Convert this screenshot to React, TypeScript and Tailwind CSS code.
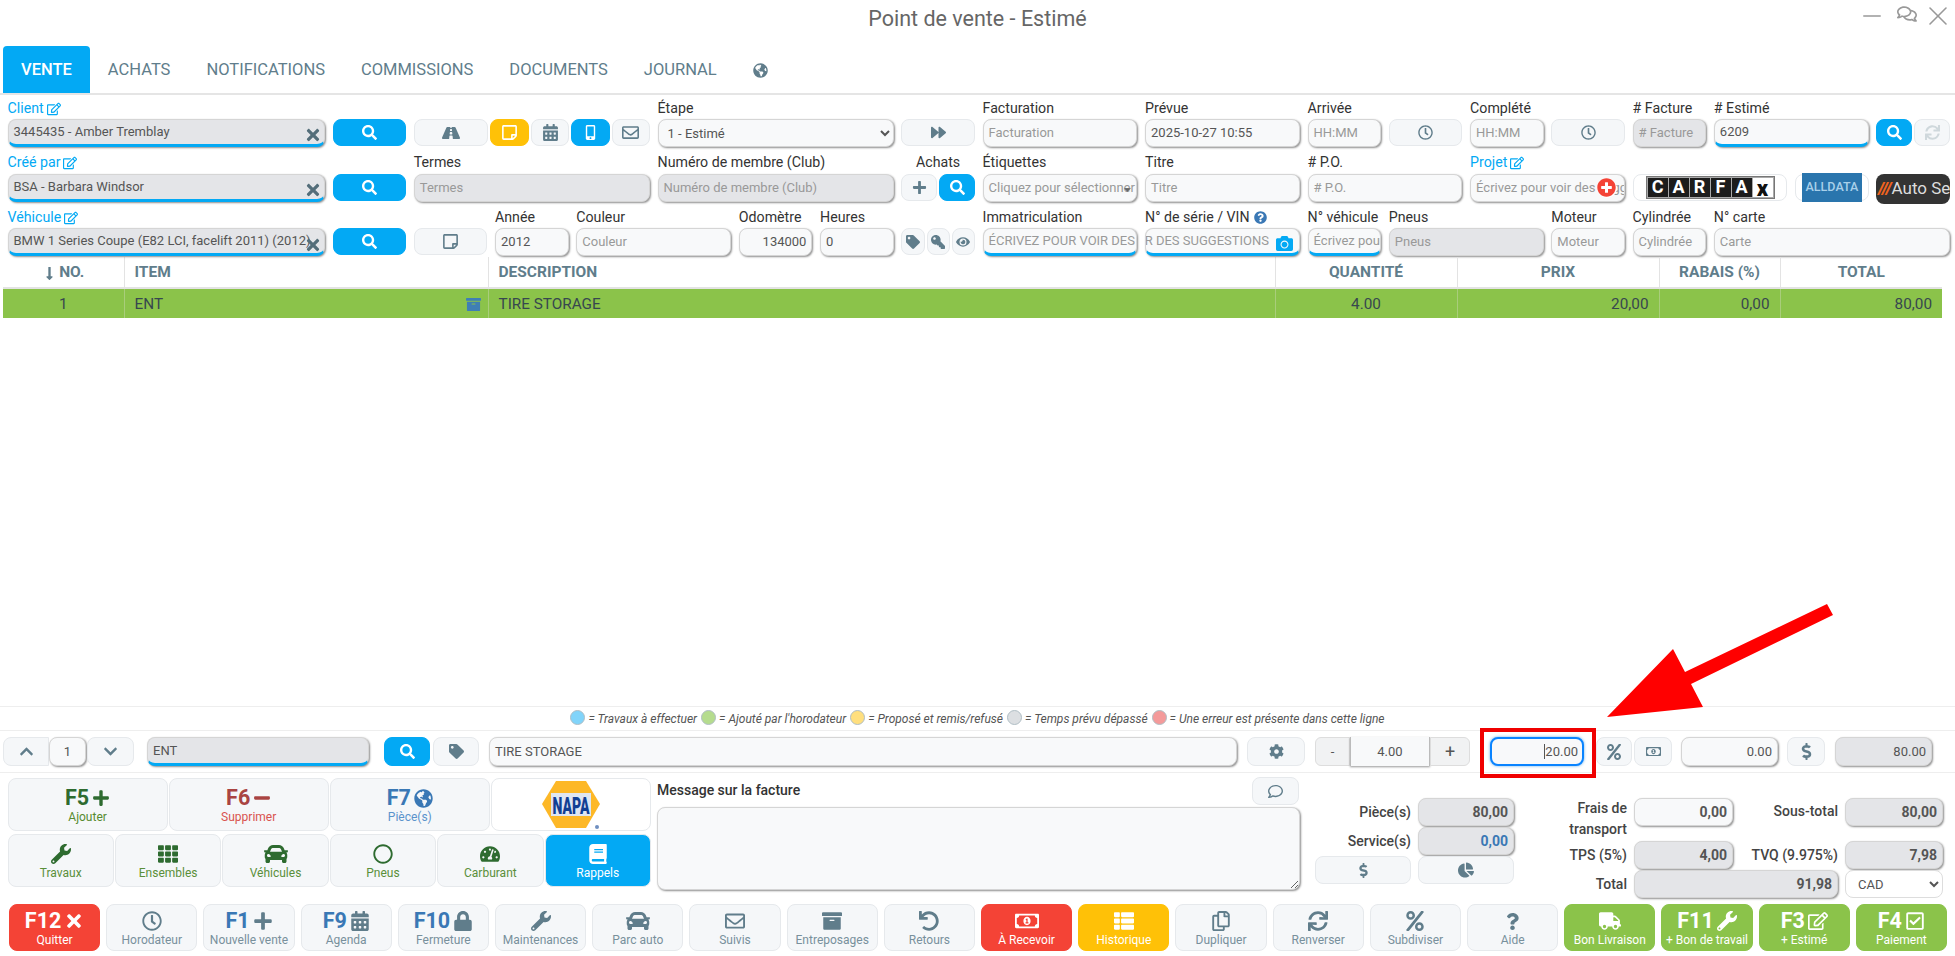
import type { ReactNode } from 'react'
import {
  FaArchive, FaBook, FaCalendarAlt, FaCamera, FaCar, FaCaretDown, FaChartPie, FaChevronDown, FaChevronUp, FaCog,
  FaDollarSign, FaForward, FaGlobeAmericas, FaKey, FaLock, FaLongArrowAltDown, FaMinus, FaMobileAlt,
  FaEye, FaPercent, FaPlus, FaPlusCircle, FaQuestion, FaQuestionCircle, FaRegCheckSquare, FaRegCircle,
  FaRegClock, FaRegComment, FaRegComments, FaRegCopy, FaRegEdit, FaRegEnvelope, FaRegMoneyBillAlt,
  FaRegStickyNote, FaRoad, FaSearch, FaSync, FaTachometerAlt, FaTag, FaTh, FaThList, FaTimes, FaTruck, FaUndo, FaWrench,
} from 'react-icons/fa'
import { Minus, X } from 'lucide-react'

const inputBase =
  'flex h-full w-full min-w-0 items-center overflow-hidden whitespace-nowrap rounded-lg border border-[#d5d5d5] px-[5px] text-[13px] shadow-[1px_1px_2px_#8f8f8f]'

interface FieldProps {
  value?: string
  placeholder?: string
  gray?: boolean
  accent?: boolean
  right?: boolean
  className?: string
  children?: ReactNode
}

function Field({ value, placeholder, gray, accent, right, className, children }: FieldProps) {
  return (
    <div
      className={`${inputBase} ${gray ? 'bg-[#e4e5e8]' : 'bg-[#f8f9fa]'} ${accent ? 'border-b-[3px] border-b-[#03a9f4]' : ''} ${right ? 'justify-end' : ''} ${className ?? ''}`}
    >
      <span className={value ? 'text-[#555]' : 'text-[#999]'}>{value ?? placeholder}</span>
      {children}
    </div>
  )
}

function Btn({ children, className, tone }: { children?: ReactNode; className?: string; tone?: 'blue' | 'yellow' }) {
  const toneClass =
    tone === 'blue'
      ? 'bg-[#03a9f4] border-[#03a9f4] text-white'
      : tone === 'yellow'
        ? 'bg-[#ffc107] border-[#ffc107] text-white'
        : 'bg-[#f5f7f9] border-[#e6e9ec] text-[#607d8b]'
  return (
    <div className={`flex h-[27px] min-w-0 flex-1 items-center justify-center rounded-lg border text-[15px] ${toneClass} ${className ?? ''}`}>
      {children}
    </div>
  )
}

function Cell({ span, label, link, center, children }: { span: string; label?: ReactNode; link?: boolean; center?: boolean; children: ReactNode }) {
  return (
    <div className={`${span} flex min-w-0 flex-col`}>
      <div
        className={`flex h-[23px] items-center gap-[3px] whitespace-nowrap pt-[2px] text-[14.2px] ${link ? 'text-[#03a9f4]' : 'text-[#333]'} ${center ? 'justify-center' : ''}`}
      >
        {label}
        {link && <FaRegEdit className="text-[14px]" />}
      </div>
      <div className="flex h-[28px] gap-[2px]">{children}</div>
    </div>
  )
}

function ClearIcon({ className }: { className?: string }) {
  return <FaTimes className={`-mr-[3px] ml-auto mt-[6px] shrink-0 text-[18px] text-[#546e7a] ${className ?? ''}`} />
}

function TopForm() {
  const row = 'grid grid-cols-[repeat(24,minmax(0,1fr))] gap-x-[7.6px] pl-[7.5px] pr-[5px]'
  return (
    <div className="pt-[1px]">
      <div className={`${row} h-[54.5px]`}>
        <Cell span="col-span-4" label="Client" link>
          <Field value="3445435 - Amber Tremblay" gray accent><ClearIcon /></Field>
        </Cell>
        <Cell span="col-span-1"><Btn tone="blue"><FaSearch /></Btn></Cell>
        <Cell span="col-span-3">
          <Btn className="flex-[2] !text-[18px]"><FaRoad /></Btn>
          <Btn tone="yellow" className="!text-[17px]"><FaRegStickyNote /></Btn>
          <Btn className="!text-[17px]"><FaCalendarAlt /></Btn>
          <Btn tone="blue"><FaMobileAlt /></Btn>
          <Btn className="!text-[17px]"><FaRegEnvelope /></Btn>
        </Cell>
        <Cell span="col-span-3" label="Étape">
          <select className={`${inputBase} bg-[#f8f9fa] text-[#555]`} defaultValue="1">
            <option value="1">1 - Estimé</option>
          </select>
        </Cell>
        <Cell span="col-span-1"><Btn><FaForward /></Btn></Cell>
        <Cell span="col-span-2" label="Facturation"><Field placeholder="Facturation" /></Cell>
        <Cell span="col-span-2" label="Prévue"><Field value="2025-10-27 10:55" /></Cell>
        <Cell span="col-span-1" label="Arrivée"><Field placeholder="HH:MM" /></Cell>
        <Cell span="col-span-1"><Btn><FaRegClock /></Btn></Cell>
        <Cell span="col-span-1" label="Complété"><Field placeholder="HH:MM" /></Cell>
        <Cell span="col-span-1"><Btn><FaRegClock /></Btn></Cell>
        <Cell span="col-span-1" label="# Facture"><Field placeholder="# Facture" gray /></Cell>
        <Cell span="col-span-2" label="# Estimé"><Field value="6209" accent /></Cell>
        <Cell span="col-span-1">
          <Btn tone="blue"><FaSearch /></Btn>
          <Btn className="!text-[#cfd8dc]"><FaSync /></Btn>
        </Cell>
      </div>

      <div className={`${row} h-[54.5px]`}>
        <Cell span="col-span-4" label="Créé par" link>
          <Field value="BSA - Barbara Windsor" gray accent><ClearIcon /></Field>
        </Cell>
        <Cell span="col-span-1"><Btn tone="blue"><FaSearch /></Btn></Cell>
        <Cell span="col-span-3" label="Termes"><Field placeholder="Termes" gray /></Cell>
        <Cell span="col-span-3" label="Numéro de membre (Club)"><Field placeholder="Numéro de membre (Club)" gray /></Cell>
        <Cell span="col-span-1" label="Achats" center>
          <Btn><FaPlus /></Btn>
          <Btn tone="blue"><FaSearch /></Btn>
        </Cell>
        <Cell span="col-span-2" label="Étiquettes">
          <Field placeholder="Cliquez pour sélectionner" className="relative border-[#bbb]">
            <FaCaretDown className="absolute right-[3px] top-[9px] text-[11px] text-[#666]" />
          </Field>
        </Cell>
        <Cell span="col-span-2" label="Titre"><Field placeholder="Titre" /></Cell>
        <Cell span="col-span-2" label="# P.O."><Field placeholder="# P.O." /></Cell>
        <Cell span="col-span-2" label="Projet" link>
          <Field placeholder="Écrivez pour voir des suggestions" className="relative">
            <span className="absolute right-[7px] top-[3px] flex h-[20px] w-[20px] items-center justify-center rounded-full bg-white">
              <FaPlusCircle className="text-[19px] text-[#f44336]" />
            </span>
          </Field>
        </Cell>
        <Cell span="col-span-2">
          <Btn className="!bg-white"><CarfaxLogo /></Btn>
        </Cell>
        <Cell span="col-span-1">
          <Btn className="!bg-white px-[6px]">
            <div className="flex h-[29px] w-full items-center justify-center bg-[#2a75ad] text-[12.5px] font-medium text-[#a8d0ea]">ALLDATA</div>
          </Btn>
        </Cell>
        <Cell span="col-span-1">
          <div className="flex h-[30px] w-full items-center overflow-hidden whitespace-nowrap rounded-lg bg-[#333] pl-[2px] text-[17px] text-[#ddd]">
            <span className="font-black italic text-[#f0641e]">///</span>Auto Serv
          </div>
        </Cell>
      </div>

      <div className={`${row} h-[51px]`}>
        <Cell span="col-span-4" label="Véhicule" link>
          <Field value="BMW 1 Series Coupe (E82 LCI, facelift 2011) (2012)" gray accent className="relative">
            <FaTimes className="absolute right-[2px] top-[7px] text-[18px] text-[#546e7a]" />
          </Field>
        </Cell>
        <Cell span="col-span-1"><Btn tone="blue"><FaSearch /></Btn></Cell>
        <Cell span="col-span-1"><Btn className="!text-[17px]"><FaRegStickyNote /></Btn></Cell>
        <Cell span="col-span-1" label="Année"><Field value="2012" /></Cell>
        <Cell span="col-span-2" label="Couleur"><Field placeholder="Couleur" /></Cell>
        <Cell span="col-span-1" label="Odomètre"><Field value="134000" right /></Cell>
        <Cell span="col-span-1" label="Heures"><Field value="0" /></Cell>
        <Cell span="col-span-1">
          <Btn className="!text-[14px]"><FaTag /></Btn>
          <Btn className="!text-[14px]"><FaKey className="-scale-x-100" /></Btn>
          <Btn className="!text-[14px]"><FaEye /></Btn>
        </Cell>
        <Cell span="col-span-2" label="Immatriculation"><Field placeholder="ÉCRIVEZ POUR VOIR DES SUGGESTIONS" accent /></Cell>
        <Cell
          span="col-span-2"
          label={<>N° de série / VIN <FaQuestionCircle className="ml-[1px] text-[13px] text-[#3a78b5]" /></>}
        >
          <Field placeholder="ÉCRIVEZ POUR VOIR DES SUGGESTIONS" accent right className="relative pr-[30px]">
            <FaCamera className="absolute right-[6px] top-[6px] text-[17px] text-[#03a9f4]" />
          </Field>
        </Cell>
        <Cell span="col-span-1" label="N° véhicule"><Field placeholder="Écrivez pour" accent /></Cell>
        <Cell span="col-span-2" label="Pneus"><Field placeholder="Pneus" gray /></Cell>
        <Cell span="col-span-1" label="Moteur"><Field placeholder="Moteur" /></Cell>
        <Cell span="col-span-1" label="Cylindrée"><Field placeholder="Cylindrée" /></Cell>
        <Cell span="col-span-3" label="N° carte"><Field placeholder="Carte" /></Cell>
      </div>
    </div>
  )
}

function CarfaxLogo() {
  return (
    <div className="flex h-[23px] items-center gap-[1px] border border-[#777] bg-[#aaa] px-[1px] text-[18px] font-bold leading-none text-white">
      {['C', 'A', 'R', 'F', 'A'].map((letter, i) => (
        <span key={i} className="flex h-[19px] w-[20px] items-center justify-center bg-[#1c1c1c]">{letter}</span>
      ))}
      <span className="flex h-[19px] w-[20px] items-end justify-center bg-white text-[22px] font-black leading-[17px] text-[#111]">x</span>
    </div>
  )
}

function LinesTable() {
  const head = 'border-l border-[#e3e3e3] px-[10px] pt-[2px] text-[15.5px] font-bold text-[#607d8b]'
  const cell = 'border-l border-[#a9cd7b] px-[10px] pt-[1px] text-[15.3px] text-[#37474f]'
  return (
    <table className="ml-[3px] mt-[1px] w-[1939px] table-fixed border-collapse">
      <colgroup>
        <col className="w-[121px]" />
        <col className="w-[364px]" />
        <col className="w-[787px]" />
        <col className="w-[182px]" />
        <col className="w-[202px]" />
        <col className="w-[121px]" />
        <col className="w-[162px]" />
      </colgroup>
      <thead>
        <tr className="h-[31px] border-b-2 border-[#e3e3e3]">
          <th className="pt-[2px] text-center text-[15.5px] font-bold text-[#607d8b]">
            <FaLongArrowAltDown className="mr-[2px] inline text-[15px]" />NO.
          </th>
          <th className={`${head} text-left`}>ITEM</th>
          <th className={`${head} text-left`}>DESCRIPTION</th>
          <th className={`${head} text-center`}>QUANTITÉ</th>
          <th className={`${head} text-center`}>PRIX</th>
          <th className={`${head} text-center`}>RABAIS (%)</th>
          <th className={`${head} text-center`}>TOTAL</th>
        </tr>
      </thead>
      <tbody>
        <tr className="h-[30px] bg-[#8bc34a]">
          <td className="pt-[1px] text-center text-[15.3px] text-[#37474f]">1</td>
          <td className={cell}>
            <div className="flex items-center justify-between">ENT<FaArchive className="mr-[-3px] text-[15px] text-[#3f7fb5]" /></div>
          </td>
          <td className={cell}>TIRE STORAGE</td>
          <td className={`${cell} text-center`}>4.00</td>
          <td className={`${cell} text-right`}>20,00</td>
          <td className={`${cell} text-right`}>0,00</td>
          <td className={`${cell} text-right`}>80,00</td>
        </tr>
      </tbody>
    </table>
  )
}

function Legend() {
  const items = [
    ['bg-[#81d4fa]', 'Travaux à effectuer'],
    ['bg-[#b5dc8e]', "Ajouté par l'horodateur"],
    ['bg-[#ffdf7e]', 'Proposé et remis/refusé'],
    ['bg-[#dcdfe2]', 'Temps prévu dépassé'],
    ['bg-[#f49a9a]', 'Une erreur est présente dans cette ligne'],
  ]
  return (
    <div className="flex h-[25px] items-center justify-center gap-[4px] border-y border-[#eee] text-[12px] italic text-[#555]">
      {items.map(([color, text]) => (
        <span key={text} className="flex items-center gap-[3px]">
          <span className={`mb-[3px] h-[15px] w-[15px] rounded-full border border-[#b0bec5] ${color}`} />= {text}
        </span>
      ))}
    </div>
  )
}

function LineEditor() {
  return (
    <div className="mt-[6px] flex h-[29px] items-stretch pl-[3px]">
      <Btn className="!h-full w-[46px] !flex-none rounded-r-none"><FaChevronUp /></Btn>
      <div className="w-[37px] flex-none"><Field value="1" className="justify-center" /></div>
      <Btn className="!h-full ml-[1px] w-[47px] !flex-none"><FaChevronDown /></Btn>
      <div className="ml-[13px] w-[222px] flex-none"><Field value="ENT" gray accent /></div>
      <Btn tone="blue" className="!h-full ml-[15px] w-[46px] !flex-none"><FaSearch /></Btn>
      <Btn className="!h-full ml-[3px] w-[46px] !flex-none"><FaTag /></Btn>
      <div className="ml-[10px] w-[748px] flex-none"><Field value="TIRE STORAGE" /></div>
      <Btn className="!h-full ml-[10px] w-[58px] !flex-none"><FaCog /></Btn>
      <div className="ml-[10px] flex w-[155px] flex-none text-[13px] text-[#555]">
        <div className="flex w-[35px] items-center justify-center rounded-l-md border border-[#ddd] bg-[#f1f2f3]">-</div>
        <div className="flex w-[80px] items-center justify-center border-x border-[#bbb] bg-[#f8f9fa] shadow-[0_1px_2px_#999]">4.00</div>
        <div className="flex w-[40px] items-center justify-center rounded-r-md border border-[#ddd] bg-[#f1f2f3] text-[18px]">+</div>
      </div>
      <div className="relative ml-[20px] w-[94px] flex-none">
        <div className="flex h-full w-full items-center justify-end rounded-lg border-2 border-[#0a84ff] bg-[#f8f9fa] px-[4px] text-[13px] text-[#555] shadow-[0_0_3px_#66afe9]">
          <span className="border-l border-[#555] leading-[15px]">20.00</span>
        </div>
        <div className="absolute -bottom-[12px] -left-[10px] -right-[12px] -top-[9px] border-[4px] border-[#f00000]" />
      </div>
      <Btn className="!h-full ml-[12px] w-[36px] !flex-none !text-[16px]"><FaPercent /></Btn>
      <Btn className="!h-full ml-[2px] w-[38px] !flex-none"><FaRegMoneyBillAlt /></Btn>
      <div className="ml-[9px] w-[97px] flex-none"><Field value="0.00" right /></div>
      <Btn className="!h-full ml-[9px] w-[38px] !flex-none !text-[17px]"><FaDollarSign /></Btn>
      <div className="ml-[10px] w-[97px] flex-none"><Field value="80.00" gray right /></div>
    </div>
  )
}

function NapaLogo() {
  return (
    <svg width="60" height="50" viewBox="0 0 60 50">
      <polygon points="15,1 45,1 59,24 45,48 15,48 1,24" fill="#fdb827" />
      <rect x="10" y="13" width="40" height="23" fill="#dfe6f2" />
      <text x="30" y="34" textAnchor="middle" fontFamily="Roboto, sans-serif" fontWeight="900" fontSize="24" fill="#123f94" textLength="37" lengthAdjust="spacingAndGlyphs">NAPA</text>
      <circle cx="56" cy="47" r="2" fill="#6f8fc0" />
    </svg>
  )
}

function ShortcutPanel() {
  const second = [
    { icon: <FaWrench />, label: 'Travaux' },
    { icon: <FaTh />, label: 'Ensembles' },
    { icon: <FaCar className="text-[24px]" />, label: 'Véhicules' },
    { icon: <FaRegCircle />, label: 'Pneus' },
    { icon: <FaTachometerAlt />, label: 'Carburant' },
  ]
  const tile = 'flex flex-col items-center justify-end rounded-lg border border-[#e6e9ec] pb-[4px]'
  const keyText = 'flex h-[20px] items-center gap-[3px] text-[21.5px] font-bold'
  return (
    <div className="flex w-[651px] flex-none flex-col gap-[3px] pl-[7.5px] pt-[1px]">
      <div className="grid h-[53px] grid-cols-4 gap-px">
        <div className={`${tile} bg-[#f5f7f9] text-[#2e6b30]`}>
          <span className={keyText}>F5<FaPlus className="text-[18px]" /></span>
          <span className="text-[12px] leading-[18px] text-[#558b2f]">Ajouter</span>
        </div>
        <div className={`${tile} bg-[#f5f7f9] text-[#a94442]`}>
          <span className={keyText}>F6<FaMinus className="text-[18px]" /></span>
          <span className="text-[12px] leading-[18px] text-[#d9534f]">Supprimer</span>
        </div>
        <div className={`${tile} bg-[#f5f7f9] text-[#3a78b5]`}>
          <span className={keyText}>F7<FaGlobeAmericas className="text-[19px]" /></span>
          <span className="text-[12px] leading-[18px] text-[#5b93cc]">Pièce(s)</span>
        </div>
        <div className={`${tile} !justify-center !pb-0 bg-white`}><NapaLogo /></div>
      </div>
      <div className="grid h-[53px] grid-cols-6 gap-px">
        {second.map((item) => (
          <div key={item.label} className={`${tile} bg-[#f5f7f9] text-[#2e6b30]`}>
            <span className="flex h-[20px] items-center text-[20px]">{item.icon}</span>
            <span className="text-[12px] leading-[18px] text-[#5a8f3a]">{item.label}</span>
          </div>
        ))}
        <div className={`${tile} border-[#03a9f4] bg-[#03a9f4] text-white`}>
          <span className="flex h-[20px] items-center text-[20px]"><FaBook /></span>
          <span className="text-[12px] leading-[18px]">Rappels</span>
        </div>
      </div>
    </div>
  )
}

function MessagePanel() {
  return (
    <div className="ml-[6px] flex w-[643px] flex-none flex-col">
      <div className="flex h-[30px] items-start justify-between">
        <span className="mt-[3px] text-[14px] font-medium text-[#333]">Message sur la facture</span>
        <Btn className="!h-[28px] mr-[1px] w-[47px] !flex-none"><FaRegComment /></Btn>
      </div>
      <textarea className="h-[83px] w-full rounded-lg border border-[#d5d5d5] bg-[#f8f9fa] shadow-[1px_1px_2px_#8f8f8f]" readOnly />
    </div>
  )
}

function Amount({ value, blue, gray }: { value: string; blue?: boolean; gray?: boolean }) {
  return (
    <div
      className={`flex h-[28px] items-center justify-end rounded-lg border border-[#d5d5d5] px-[5px] text-[14px] font-bold shadow-[1px_1px_2px_#8f8f8f] ${gray ? 'bg-[#e4e5e8]' : 'bg-[#f8f9fa]'} ${blue ? 'text-[#3a78b5]' : 'text-[#555]'}`}
    >
      {value}
    </div>
  )
}

function PartsPanel() {
  return (
    <div className="ml-[15px] grid w-[199px] flex-none grid-cols-[96px_96px] grid-rows-[28px_28px_28px] gap-x-[7px] gap-y-px pt-[21px] text-[14px] font-medium text-[#444]">
      <span className="flex items-center justify-end">Pièce(s)</span>
      <Amount value="80,00" gray />
      <span className="flex items-center justify-end">Service(s)</span>
      <Amount value="0,00" gray blue />
      <Btn className="!h-[28px]"><FaDollarSign /></Btn>
      <Btn className="!h-[28px] !text-[16px]"><FaChartPie /></Btn>
    </div>
  )
}

function TotalsPanel() {
  const label = 'flex items-center justify-end text-right'
  return (
    <div className="ml-[6px] grid w-[423px] flex-none grid-cols-[107px_99px_98px_98px] grid-rows-[42px_28px_28px] gap-x-[7px] gap-y-px pt-[21px] text-[14px] font-medium leading-[21px] text-[#444]">
      <span className="text-right">Frais de transport</span>
      <div><Amount value="0,00" /></div>
      <span className="mt-[3px] h-[21px] text-right">Sous-total</span>
      <div><Amount value="80,00" gray /></div>
      <span className={label}>TPS (5%)</span>
      <Amount value="4,00" gray />
      <span className={label}>TVQ (9.975%)</span>
      <Amount value="7,98" gray />
      <span className={label}>Total</span>
      <div className="col-span-2"><Amount value="91,98" gray /></div>
      <select className="h-[28px] rounded-lg border border-[#ddd] bg-white pl-[8px] text-[13px] font-normal text-[#555]" defaultValue="CAD">
        <option>CAD</option>
      </select>
    </div>
  )
}

type Tone = 'plain' | 'red' | 'yellow' | 'green'

interface Action {
  label: string
  icon: ReactNode
  fkey?: string
  tone?: Tone
}

const actions: Action[] = [
  { fkey: 'F12', icon: <FaTimes />, label: 'Quitter', tone: 'red' },
  { icon: <FaRegClock />, label: 'Horodateur' },
  { fkey: 'F1', icon: <FaPlus />, label: 'Nouvelle vente' },
  { fkey: 'F9', icon: <FaCalendarAlt />, label: 'Agenda' },
  { fkey: 'F10', icon: <FaLock />, label: 'Fermeture' },
  { icon: <FaWrench />, label: 'Maintenances' },
  { icon: <FaCar className="text-[24px]" />, label: 'Parc auto' },
  { icon: <FaRegEnvelope />, label: 'Suivis' },
  { icon: <FaArchive />, label: 'Entreposages' },
  { icon: <FaUndo />, label: 'Retours' },
  { icon: <FaRegMoneyBillAlt className="text-[24px]" />, label: 'À Recevoir', tone: 'red' },
  { icon: <FaThList />, label: 'Historique', tone: 'yellow' },
  { icon: <FaRegCopy />, label: 'Dupliquer' },
  { icon: <FaSync />, label: 'Renverser' },
  { icon: <FaPercent />, label: 'Subdiviser' },
  { icon: <FaQuestion className="text-[17px]" />, label: 'Aide' },
  { icon: <FaTruck className="text-[22px]" />, label: 'Bon Livraison', tone: 'green' },
  { fkey: 'F11', icon: <FaWrench />, label: '+ Bon de travail', tone: 'green' },
  { fkey: 'F3', icon: <FaRegEdit />, label: '+ Estimé', tone: 'green' },
  { fkey: 'F4', icon: <FaRegCheckSquare />, label: 'Paiement', tone: 'green' },
]

const toneStyles: Record<Tone, string> = {
  plain: 'bg-[#f5f7f9] border-[#e6e9ec] text-[#607d8b]',
  red: 'bg-[#f44336] border-[#f44336] text-white',
  yellow: 'bg-[#ffc107] border-[#ffc107] text-white',
  green: 'bg-[#8bc34a] border-[#8bc34a] text-white',
}

function ActionBar() {
  return (
    <div className="mb-[5px] ml-[9px] mt-[7px] grid h-[47px] w-[1938px] grid-cols-[repeat(20,minmax(0,1fr))] gap-x-[6px]">
      {actions.map((action) => {
        const tone = action.tone ?? 'plain'
        return (
          <div key={action.label} className={`flex flex-col items-center justify-end overflow-hidden whitespace-nowrap rounded-lg border pb-[2px] ${toneStyles[tone]}`}>
            <span className="flex h-[22px] items-center gap-[3px] text-[20px]">
              {action.fkey && (
                <span className={`text-[21.5px] font-bold ${tone === 'plain' ? 'text-[#3a78b5]' : ''}`}>{action.fkey}</span>
              )}
              {action.icon}
            </span>
            <span className={`text-[12px] leading-[16px] ${tone === 'plain' ? 'text-[#78909c]' : ''}`}>{action.label}</span>
          </div>
        )
      })}
    </div>
  )
}

export default function App() {
  const tabs = ['ACHATS', 'NOTIFICATIONS', 'COMMISSIONS', 'DOCUMENTS', 'JOURNAL']
  return (
    <div className="relative flex h-[956px] w-[1955px] flex-col overflow-hidden bg-white font-['Roboto',sans-serif]">
      <header className="relative flex h-[46px] items-start justify-center pt-[3px] text-[21.5px] text-[#666]">
        Point de vente - Estimé
        <div className="absolute right-[1px] top-0 flex h-[32px] items-center text-[#999]">
          <Minus size={28} strokeWidth={1.4} />
          <FaRegComments className="mb-[4px] ml-[11px] text-[20px]" />
          <X size={32} strokeWidth={1.2} className="ml-[5px]" />
        </div>
      </header>

      <nav className="flex h-[49px] flex-none items-stretch border-b-2 border-[#e5e5e5] pl-[3px] text-[16.5px] text-[#607d8b]">
        <div className="flex items-center rounded-t-sm bg-[#03a9f4] px-[18px] pt-[2px] font-medium text-white">VENTE</div>
        {tabs.map((tab) => (
          <div key={tab} className="flex items-center px-[18px] pt-[2px]">{tab}</div>
        ))}
        <div className="flex items-center px-[18px] pt-[2px]"><FaGlobeAmericas className="text-[15px]" /></div>
      </nav>

      <TopForm />
      <LinesTable />
      <div className="flex-1" />

      <Legend />
      <LineEditor />
      <div className="mt-[6px] border-t border-[#eee]" />
      <div className="mt-[4px] flex h-[120px] flex-none">
        <ShortcutPanel />
        <MessagePanel />
        <PartsPanel />
        <TotalsPanel />
      </div>
      <ActionBar />

      {/* annotation arrow drawn over the page */}
      <svg className="pointer-events-none absolute left-0 top-0" width="1955" height="956">
        <polygon points="1827,604 1833,615 1691,684 1703,707 1607,717 1673,649 1685,672" fill="#ff0000" />
      </svg>
    </div>
  )
}
